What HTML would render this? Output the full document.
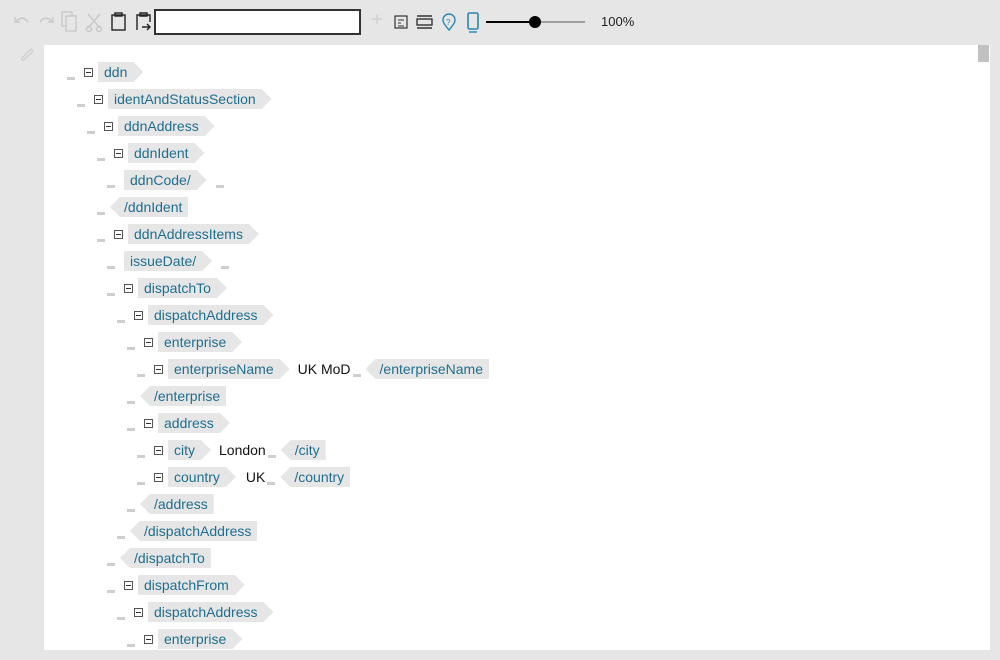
<!DOCTYPE html>
<html><head><meta charset="utf-8"><style>
body{margin:0;width:1000px;height:660px;background:#e6e6e6;font-family:"Liberation Sans",sans-serif;position:relative;overflow:hidden}
#pane{position:absolute;left:44px;top:45px;width:946px;height:605px;background:#fff}
.sb{position:absolute;left:978px;top:45px;width:11px;height:17px;background:#c1c1c1}
.r{position:absolute;height:20px;display:flex;align-items:center;font-size:14px;white-space:nowrap}
.u{width:8px;height:3px;background:#cfcfcf;align-self:flex-end;margin-bottom:2px}
.b{width:7px;height:7px;border:1px solid #555;position:relative;margin-left:9px;flex:none}
.b:after{content:"";position:absolute;left:1px;top:3px;width:5px;height:1px;background:#333}
.o{background:#e6e6e6;color:#1f6e8f;height:20px;line-height:20px;padding:0 16px 0 6px;clip-path:polygon(0 0,calc(100% - 10px) 0,100% 50%,calc(100% - 10px) 100%,0 100%)}
.c{background:#e6e6e6;color:#1f6e8f;height:20px;line-height:20px;padding:0 6px 0 14px;clip-path:polygon(10px 0,100% 0,100% 100%,10px 100%,0 50%)}
.t{color:#111;margin-left:8px}
</style></head><body>
<div id="pane"></div><div class="sb"></div>
<svg width="600" height="70" style="position:absolute;left:0;top:0" fill="none" stroke-width="1.4">
<path d="M16 22c3-5 9-5 12 0M15 17v5h5" stroke="#c8c8c8"/>
<path d="M52 22c-3-5-9-5-12 0M53 17v5h-5" stroke="#c8c8c8"/>
<rect x="62" y="12" width="10" height="14" stroke="#c8c8c8"/><rect x="66" y="16" width="10" height="15" stroke="#c8c8c8" fill="#e6e6e6"/>
<path d="M88 14l12 14M100 14l-12 14" stroke="#c8c8c8"/><circle cx="89" cy="29" r="2.5" stroke="#c8c8c8"/><circle cx="99" cy="29" r="2.5" stroke="#c8c8c8"/>
<rect x="112" y="15" width="13" height="15" stroke="#222"/><rect x="115" y="13" width="7" height="3" stroke="#222"/>
<path d="M137 30v-15h13v7M140 13h7v3h-7zM142 27h8M147 24l3 3-3 3" stroke="#222"/>
<path d="M22 58l9-9 2 2-9 9h-2z" stroke="#cfcfcf"/>
<rect x="155" y="10" width="205" height="24" fill="#fff" stroke="#333" stroke-width="2"/>
<path d="M377 14v10M372 19h10" stroke="#d0d0d0"/>
<rect x="395" y="16" width="12" height="12" stroke="#333" stroke-width="1.2"/><path d="M398 20h6M398 23h3M398 26h6" stroke="#333" stroke-width="1"/>
<path d="M417 16h15M417 28h15" stroke="#333"/><rect x="417" y="19" width="15" height="6" stroke="#333"/>
<path d="M449 30c-4-5-6-7-6-10a6 6 0 0112 0c0 3-2 5-6 10z" stroke="#2a86b5"/><text x="446" y="25" font-size="8" fill="#2a86b5" font-family="Liberation Sans">?</text>
<rect x="468" y="13" width="10" height="16" rx="1.5" stroke="#2a86b5" stroke-width="1.6"/><path d="M469 32h8" stroke="#2a86b5"/>
<path d="M486 22h50" stroke="#000" stroke-width="2"/><path d="M536 22h49" stroke="#888" stroke-width="1.5"/><circle cx="535" cy="22" r="6" fill="#000" stroke="none"/>
</svg>
<div style="position:absolute;left:601px;top:14px;font-size:13px;color:#222">100%</div>

<div class="r" style="left:67px;top:62px"><span class="u"></span><span class="b"></span><span class="o" style="margin-left:5px">ddn</span></div>
<div class="r" style="left:77px;top:89px"><span class="u"></span><span class="b"></span><span class="o" style="margin-left:5px">identAndStatusSection</span></div>
<div class="r" style="left:87px;top:116px"><span class="u"></span><span class="b"></span><span class="o" style="margin-left:5px">ddnAddress</span></div>
<div class="r" style="left:97px;top:143px"><span class="u"></span><span class="b"></span><span class="o" style="margin-left:5px">ddnIdent</span></div>
<div class="r" style="left:107px;top:170px"><span class="u"></span><span class="o" style="margin-left:9px">ddnCode/</span><span class="u" style="margin-left:9px"></span></div>
<div class="r" style="left:97px;top:197px"><span class="u"></span><span class="c" style="margin-left:5px">/ddnIdent</span></div>
<div class="r" style="left:97px;top:224px"><span class="u"></span><span class="b"></span><span class="o" style="margin-left:5px">ddnAddressItems</span></div>
<div class="r" style="left:107px;top:251px"><span class="u"></span><span class="o" style="margin-left:9px">issueDate/</span><span class="u" style="margin-left:9px"></span></div>
<div class="r" style="left:107px;top:278px"><span class="u"></span><span class="b"></span><span class="o" style="margin-left:5px">dispatchTo</span></div>
<div class="r" style="left:117px;top:305px"><span class="u"></span><span class="b"></span><span class="o" style="margin-left:5px">dispatchAddress</span></div>
<div class="r" style="left:127px;top:332px"><span class="u"></span><span class="b"></span><span class="o" style="margin-left:5px">enterprise</span></div>
<div class="r" style="left:137px;top:359px"><span class="u"></span><span class="b"></span><span class="o" style="margin-left:5px">enterpriseName</span><span class="t">UK MoD</span><span class="u" style="margin-left:2px"></span><span class="c" style="margin-left:5px">/enterpriseName</span></div>
<div class="r" style="left:127px;top:386px"><span class="u"></span><span class="c" style="margin-left:5px">/enterprise</span></div>
<div class="r" style="left:127px;top:413px"><span class="u"></span><span class="b"></span><span class="o" style="margin-left:5px">address</span></div>
<div class="r" style="left:137px;top:440px"><span class="u"></span><span class="b"></span><span class="o" style="margin-left:5px">city</span><span class="t">London</span><span class="u" style="margin-left:2px"></span><span class="c" style="margin-left:5px">/city</span></div>
<div class="r" style="left:137px;top:467px"><span class="u"></span><span class="b"></span><span class="o" style="margin-left:5px">country</span><span class="t" style="margin-left:10px">UK</span><span class="u" style="margin-left:2px"></span><span class="c" style="margin-left:5px">/country</span></div>
<div class="r" style="left:127px;top:494px"><span class="u"></span><span class="c" style="margin-left:5px">/address</span></div>
<div class="r" style="left:117px;top:521px"><span class="u"></span><span class="c" style="margin-left:5px">/dispatchAddress</span></div>
<div class="r" style="left:107px;top:548px"><span class="u"></span><span class="c" style="margin-left:5px">/dispatchTo</span></div>
<div class="r" style="left:107px;top:575px"><span class="u"></span><span class="b"></span><span class="o" style="margin-left:5px">dispatchFrom</span></div>
<div class="r" style="left:117px;top:602px"><span class="u"></span><span class="b"></span><span class="o" style="margin-left:5px">dispatchAddress</span></div>
<div class="r" style="left:127px;top:629px"><span class="u"></span><span class="b"></span><span class="o" style="margin-left:5px">enterprise</span></div>
</body></html>
